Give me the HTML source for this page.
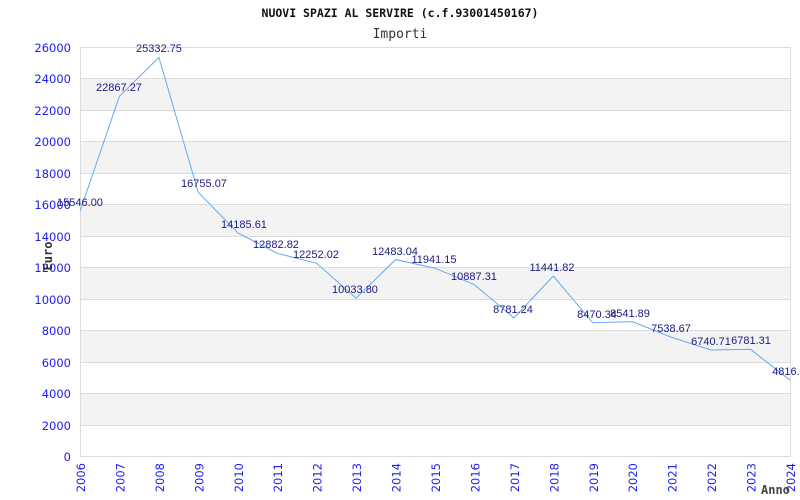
<!DOCTYPE html>
<html><head><meta charset="utf-8"><style>body{margin:0;background:#fff}svg{display:block}</style></head><body>
<svg width="800" height="500" xmlns="http://www.w3.org/2000/svg">
<rect width="800" height="500" fill="#fff"/>
<g fill="#f3f3f3">
<rect x="80" y="78.5" width="710" height="31.5"/>
<rect x="80" y="141.5" width="710" height="31.5"/>
<rect x="80" y="204.5" width="710" height="31.5"/>
<rect x="80" y="267.5" width="710" height="31.5"/>
<rect x="80" y="330.5" width="710" height="31.5"/>
<rect x="80" y="393.5" width="710" height="31.5"/>
</g>
<g stroke="#dcdcdc" stroke-width="1">
<line x1="80" y1="47.5" x2="790" y2="47.5"/><line x1="80" y1="78.5" x2="790" y2="78.5"/><line x1="80" y1="110.5" x2="790" y2="110.5"/><line x1="80" y1="141.5" x2="790" y2="141.5"/><line x1="80" y1="173.5" x2="790" y2="173.5"/><line x1="80" y1="204.5" x2="790" y2="204.5"/><line x1="80" y1="236.5" x2="790" y2="236.5"/><line x1="80" y1="267.5" x2="790" y2="267.5"/><line x1="80" y1="299.5" x2="790" y2="299.5"/><line x1="80" y1="330.5" x2="790" y2="330.5"/><line x1="80" y1="362.5" x2="790" y2="362.5"/><line x1="80" y1="393.5" x2="790" y2="393.5"/><line x1="80" y1="425.5" x2="790" y2="425.5"/><line x1="80" y1="456.5" x2="790" y2="456.5"/>
<line x1="80.5" y1="47" x2="80.5" y2="457"/><line x1="790.5" y1="47" x2="790.5" y2="457"/>
</g>
<g font-family="DejaVu Sans, sans-serif" font-size="11.5" fill="#2020f0" text-anchor="end">
<text x="71" y="52">26000</text><text x="71" y="83">24000</text><text x="71" y="115">22000</text><text x="71" y="146">20000</text><text x="71" y="178">18000</text><text x="71" y="209">16000</text><text x="71" y="241">14000</text><text x="71" y="272">12000</text><text x="71" y="304">10000</text><text x="71" y="335">8000</text><text x="71" y="367">6000</text><text x="71" y="398">4000</text><text x="71" y="430">2000</text><text x="71" y="461">0</text>
</g>
<g font-family="DejaVu Sans, sans-serif" font-size="11.5" fill="#2020f0" text-anchor="end">
<text transform="translate(85,463) rotate(-90)">2006</text><text transform="translate(124.4,463) rotate(-90)">2007</text><text transform="translate(163.9,463) rotate(-90)">2008</text><text transform="translate(203.3,463) rotate(-90)">2009</text><text transform="translate(242.8,463) rotate(-90)">2010</text><text transform="translate(282.2,463) rotate(-90)">2011</text><text transform="translate(321.7,463) rotate(-90)">2012</text><text transform="translate(361.1,463) rotate(-90)">2013</text><text transform="translate(400.6,463) rotate(-90)">2014</text><text transform="translate(440,463) rotate(-90)">2015</text><text transform="translate(479.4,463) rotate(-90)">2016</text><text transform="translate(518.9,463) rotate(-90)">2017</text><text transform="translate(558.3,463) rotate(-90)">2018</text><text transform="translate(597.8,463) rotate(-90)">2019</text><text transform="translate(637.2,463) rotate(-90)">2020</text><text transform="translate(676.7,463) rotate(-90)">2021</text><text transform="translate(716.1,463) rotate(-90)">2022</text><text transform="translate(755.6,463) rotate(-90)">2023</text><text transform="translate(795,463) rotate(-90)">2024</text>
</g>
<polyline fill="none" stroke="#66aaee" stroke-width="1" points="80,211.4 119.4,96.3 158.9,57.5 198.3,192.4 237.8,232.8 277.2,253.3 316.7,263.3 356.1,298.2 395.6,259.6 435,268.2 474.4,284.7 513.9,317.9 553.3,276 592.8,322.8 632.2,321.6 671.7,337.4 711.1,350 750.6,349.3 790,380.2"/>
<g font-family="Liberation Sans, sans-serif" font-size="11" fill="#1a1a80" text-anchor="middle">
<text x="80" y="206">15546.00</text><text x="119" y="91">22867.27</text><text x="159" y="52">25332.75</text><text x="204" y="187">16755.07</text><text x="244" y="228">14185.61</text><text x="276" y="248">12882.82</text><text x="316" y="258">12252.02</text><text x="355" y="293">10033.80</text><text x="395" y="255">12483.04</text><text x="434" y="263">11941.15</text><text x="474" y="280">10887.31</text><text x="513" y="313">8781.24</text><text x="552" y="271">11441.82</text><text x="597" y="318">8470.34</text><text x="630" y="317">8541.89</text><text x="671" y="332">7538.67</text><text x="711" y="345">6740.71</text><text x="751" y="344">6781.31</text><text x="789" y="375">4816.4</text>
</g>
<text x="400" y="17" font-family="DejaVu Sans Mono, monospace" font-size="11.5" font-weight="bold" text-anchor="middle" fill="#111">NUOVI SPAZI AL SERVIRE (c.f.93001450167)</text>
<text x="400" y="38" font-family="DejaVu Sans Mono, monospace" font-size="13" text-anchor="middle" fill="#333">Importi</text>
<text transform="translate(52,256) rotate(-90)" font-family="DejaVu Sans Mono, monospace" font-size="12" font-weight="bold" text-anchor="middle" fill="#333">Euro</text>
<text x="761" y="494" font-family="DejaVu Sans Mono, monospace" font-size="12" font-weight="bold" fill="#444">Anno</text>
</svg>
</body></html>
